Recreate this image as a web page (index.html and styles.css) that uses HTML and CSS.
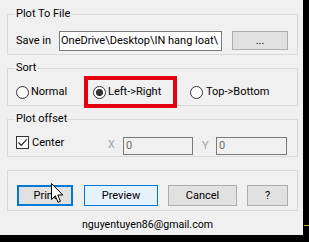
FILE: index.html
```html
<!DOCTYPE html>
<html>
<head>
<meta charset="utf-8">
<link rel="stylesheet" href="styles.css">
</head>
<body>
<div class="dialog">
  <fieldset class="group g-file">
    <legend>Plot To File</legend>
    <div class="row">
      <span class="save-lbl">Save in</span>
      <div class="textbox path"><span>OneDrive\Desktop\IN hang loat\</span></div>
      <button class="btn browse">...</button>
    </div>
  </fieldset>

  <fieldset class="group g-sort">
    <legend>Sort</legend>
    <div class="row">
      <label class="radio r1"><span class="circle"></span>Normal</label>
      <label class="radio r2"><span class="circle on"></span>Left-&gt;Right</label>
      <label class="radio r3"><span class="circle"></span>Top-&gt;Bottom</label>
    </div>
    <div class="highlight"></div>
  </fieldset>

  <fieldset class="group g-offset">
    <legend>Plot offset</legend>
    <div class="row offset-row">
      <label class="check"><span class="box"><svg width="11" height="11" viewBox="0 0 11 11"><path d="M1.5 5.5 L4.2 8.3 L9.7 2.3" fill="none" stroke="#222" stroke-width="1.2"/></svg></span>Center</label>
      <span class="axis ax-x">X</span>
      <div class="textbox num nx">0</div>
      <span class="axis ax-y">Y</span>
      <div class="textbox num ny">0</div>
    </div>
  </fieldset>

  <fieldset class="group g-buttons">
    <div class="row btn-row">
      <button class="btn b-print">Print</button>
      <button class="btn b-preview">Preview</button>
      <button class="btn b-cancel">Cancel</button>
      <button class="btn b-help">?</button>
    </div>
  </fieldset>

  <div class="email">nguyentuyen86@gmail.com</div>

  <svg class="cursor" width="13" height="21" viewBox="0 0 13 21"><path d="M0.5 0.5 L0.5 16.5 L4.3 12.8 L7 19.3 L9.4 18.3 L6.8 12 L11.8 12 Z" fill="#fff" stroke="#000" stroke-width="1" stroke-linejoin="miter"/></svg>
</div>
<div class="tray-line"></div>
</body>
</html>
```
FILE: styles.css
```css
* { box-sizing: border-box; }
html, body { margin: 0; padding: 0; }
body {
  background: #000;
  width: 309px;
  height: 242px;
  overflow: hidden;
  position: relative;
  font-family: Roboto, "Liberation Sans", sans-serif;
  font-size: 11px;
  color: #000;
}
.dialog {
  width: 303px;
  height: 235px;
  background: #f0f0f0;
  padding-top: 7px;
  position: relative;
  overflow: hidden;
}
.group {
  margin: 0 5px 0 7px;
  border: 1px solid #d9d9d9;
  padding: 0 0 0 7px;
  min-width: 0;
  position: relative;
}
.group legend {
  padding: 0 1px;
  height: 14px;
  line-height: 14px;
  font-size: 11px;
}
.row {
  display: flex;
  align-items: center;
  padding-left: 1px;
}
.g-file { padding-top: 10px; padding-bottom: 3px; }
.g-sort { margin-top: 6px; padding-top: 7px; padding-bottom: 3px; }
.g-offset { margin-top: 6px; padding-top: 11px; padding-bottom: 1px; }
.g-buttons { margin-top: 13px; padding-top: 14px; padding-bottom: 4px; }

.save-lbl { width: 43px; line-height: 14px; }
.textbox {
  border: 1px solid #7a7a7a;
  background: #fff;
  overflow: hidden;
  white-space: nowrap;
}
.path {
  width: 163px;
  height: 20px;
  line-height: 18px;
  padding-left: 1px;
}
.btn {
  font-family: inherit;
  font-size: 11px;
  color: #000;
  background: #e1e1e1;
  border: 1px solid #adadad;
  padding: 0;
  margin: 0;
  border-radius: 0;
  line-height: 17px;
}
.browse { width: 56px; height: 19px; margin-left: 10px; margin-top: -1px; line-height: 15px; }

.radio {
  display: flex;
  align-items: center;
  height: 20px;
  line-height: 14px;
}
.r1 { width: 77px; }
.r2 { width: 97px; }
.r3 .circle { margin-right: 3px; }
.circle {
  width: 13px;
  height: 13px;
  border: 1px solid #333;
  border-radius: 50%;
  background: #fff;
  margin-right: 2px;
  flex: none;
}
.circle.on {
  background: radial-gradient(circle, #333 0 3.3px, #fff 3.9px);
}
.highlight {
  position: absolute;
  left: 76px;
  top: 1px;
  width: 93px;
  height: 32px;
  border: 4px solid #e3000f;
}

.offset-row { align-items: flex-start; }
.check {
  display: flex;
  align-items: center;
  width: 92px;
  height: 13px;
  line-height: 13px;
  margin-top: -1px;
}
.box {
  width: 13px;
  height: 13px;
  border: 1px solid #333;
  background: #fff;
  margin-right: 3px;
  flex: none;
  display: flex;
}
.axis {
  color: #a3a3a3;
  line-height: 13px;
  margin-top: 1px;
}
.ax-x { width: 15px; }
.ax-y { width: 14px; margin-left: 9px; margin-top: 2px; }
.num {
  height: 18px;
  line-height: 16px;
  background: #f0f0f0;
  border-color: #7a7a7a;
  color: #6d6d6d;
  padding-left: 2px;
}
.nx { width: 70px; }
.ny { width: 71px; }

.btn-row { padding-left: 2px; }
.btn-row .btn { height: 21px; }
.b-print {
  width: 56px;
  border-color: #0078d7;
  box-shadow: inset 0 0 0 1px #0078d7;
}
.b-preview {
  width: 74px;
  margin-left: 11px;
  background: #e5f1fb;
  border-color: #0078d7;
}
.b-cancel { width: 69px; margin-left: 10px; }
.b-help { width: 41px; margin-left: 10px; }

.email {
  margin-top: 7px;
  margin-left: 82px;
  line-height: 14px;
  font-size: 10.6px;
}
.cursor {
  position: absolute;
  left: 51px;
  top: 183px;
}
.tray-line {
  position: absolute;
  left: 304px;
  top: 225px;
  width: 5px;
  height: 1px;
  background: #c8b030;
}
```
